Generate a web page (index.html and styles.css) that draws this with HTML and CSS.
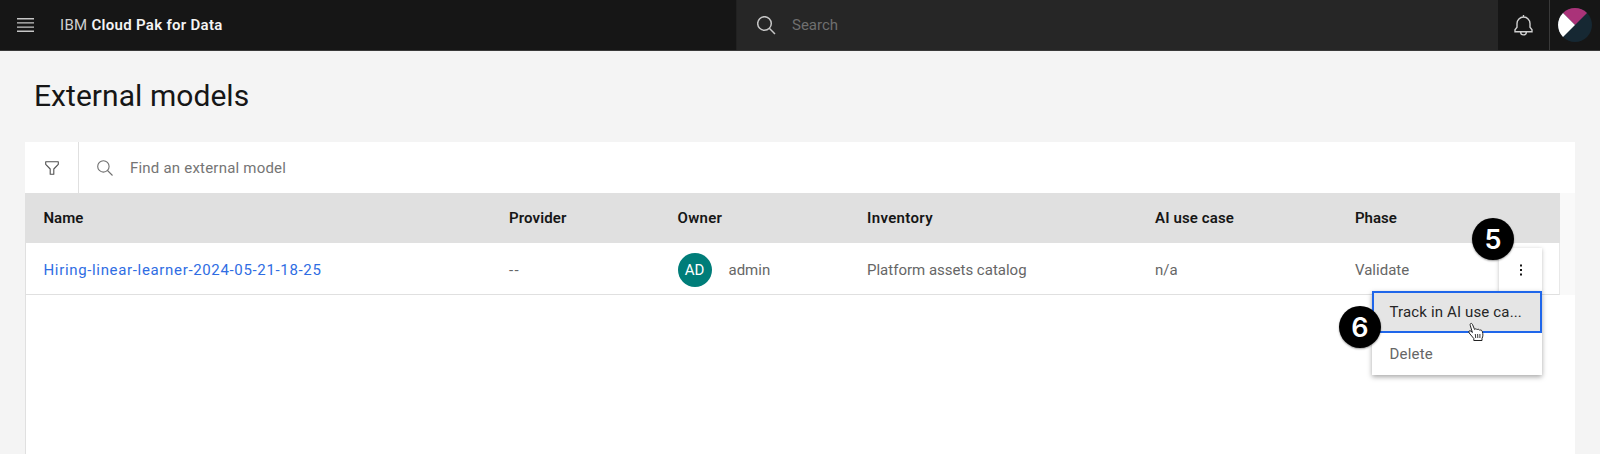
FILE: index.html
```html
<!DOCTYPE html>
<html lang="en">
<head>
<meta charset="utf-8">
<title>External models</title>
<link rel="stylesheet" href="styles.css">
</head>
<body>
<header class="topbar">
  <svg class="menu-icon" width="17" height="14" viewBox="0 0 17 14"><path d="M0 .7h17M0 4.9h17M0 9.1h17M0 13.3h17" stroke="#c6c6c6" stroke-width="1.4"/></svg>
  <div class="brand"><span class="t brand-ibm">IBM</span><span class="t brand-name">Cloud Pak for Data</span></div>
  <div class="global-search">
    <svg width="19" height="19" viewBox="0 0 19 19" fill="none" stroke="#c6c6c6" stroke-width="1.5"><circle cx="7.5" cy="7.5" r="6.8"/><path d="M12.3 12.3l5.7 5.7"/></svg>
    <span class="t">Search</span>
  </div>
  <div class="bell">
    <svg width="19" height="21" viewBox="0 0 19 21" fill="none" stroke="#d0d0d0" stroke-width="1.4"><path d="M9.5 0v2M1 16.7v-2l2-2.4V8.5a6.5 6.5 0 0 1 13 0v3.8l2 2.4v2zM6.6 17a2.9 2.9 0 0 0 5.8 0"/></svg>
  </div>
  <div class="profile">
    <svg width="34" height="34" viewBox="0 0 34 34"><circle cx="17" cy="17" r="17" fill="#162833"/><path d="M17 17L5 5A17 17 0 0 1 29 5z" fill="#aa3379"/><path d="M17 17L5 5A17 17 0 0 0 5 29z" fill="#fff"/></svg>
  </div>
</header>
<main class="page">
  <h1 class="title">External models</h1>
  <section class="panel">
    <div class="toolbar">
      <div class="filter"><svg width="14" height="14" viewBox="0 0 14 14" fill="none" stroke="#525252" stroke-width="1.1" stroke-linejoin="round"><path d="M.7.7h12.6v2.6L8.8 8v5.3H5.2V8L.7 3.3z"/></svg></div>
      <svg class="find-icon" width="16" height="16" viewBox="0 0 16 16" fill="none" stroke="#6f6f6f" stroke-width="1.1"><circle cx="6.4" cy="6.4" r="5.7"/><path d="M10.5 10.5l5 5"/></svg>
      <span class="t find-text">Find an external model</span>
    </div>
    <div class="table-area">
      <div class="table">
        <div class="row head">
          <div><span class="t">Name</span></div>
          <div><span class="t h-provider">Provider</span></div>
          <div><span class="t h-owner">Owner</span></div>
          <div><span class="t h-inventory">Inventory</span></div>
          <div><span class="t h-usecase">AI use case</span></div>
          <div><span class="t">Phase</span></div>
        </div>
        <div class="row body">
          <div><a class="t c-name">Hiring-linear-learner-2024-05-21-18-25</a></div>
          <div><span class="t c-provider">--</span></div>
          <div class="owner"><span class="initials">AD</span><span class="t">admin</span></div>
          <div><span class="t">Platform assets catalog</span></div>
          <div><span class="t">n/a</span></div>
          <div><span class="t">Validate</span></div>
        </div>
      </div>
    </div>
  </section>
</main>
<div class="overflow"><svg width="4" height="12" viewBox="0 0 4 12" fill="#161616"><rect x="1" y="0.5" width="2" height="2"/><rect x="1" y="5" width="2" height="2"/><rect x="1" y="9.5" width="2" height="2"/></svg></div>
<div class="menu">
  <div class="menu-item focused"><span class="t m-track">Track in AI use ca...</span></div>
  <div class="menu-item"><span class="t m-delete">Delete</span></div>
</div>
<div class="step step-five">5</div>
<div class="step step-six">6</div>
<svg class="cursor" width="18" height="20" viewBox="0 0 18 20"><path d="M6.8 18.5v-2L2.2 11C1 9.2 2.6 8 4 9.2l1.400 1.300L3.200 3.200C2.700 1.300 4.800.7 5.500 2.500l2.100 5c.7-1 2-.8 2.500.2.8-.8 2-.5 2.400.5 1.200-.6 2.500.1 2.900 1.500.7 2.400.7 4.700-.4 6.800v2z" fill="#fff" stroke="#222" stroke-linejoin="round"/><path d="M8.300 12l.4 4M10.600 12l.2 4M12.900 12v4" fill="none" stroke="#222" stroke-width=".9"/></svg>
</body>
</html>
```
FILE: styles.css
```css
* { box-sizing: border-box; }
body { margin: 0; height: 454px; overflow: hidden; position: relative; background: #f4f4f4; color: #161616; font-family: Roboto, sans-serif; font-size: 15px; }
svg { display: block; flex: none; }
.t { white-space: nowrap; }
.topbar { display: flex; align-items: center; height: 51px; padding-left: 17px; background: #161616; border-bottom: 1px solid #393939; }
.brand { display: flex; flex: none; gap: 4px; margin-left: 26px; width: 676px; color: #f4f4f4; }
.brand-ibm { color: #d0d0d0; letter-spacing: .3px; }
.brand-name { font-weight: 600; letter-spacing: .3px; }
.global-search { display: flex; flex: none; align-items: center; align-self: stretch; gap: 16px; width: 762px; padding-left: 20px; border-left: 1px solid #212121; background: #262626; color: #6f6f6f; }
.bell { display: flex; flex: none; align-items: center; justify-content: center; width: 51px; }
.profile { display: flex; align-items: center; align-self: stretch; border-left: 1px solid #393939; padding-left: 8px; }
.page { padding: 0 25px; }
.title { margin: 0; height: 91px; padding: 28px 0 0 9px; font-size: 30px; line-height: 34px; font-weight: 400; letter-spacing: .05px; }
.panel { height: 312px; background: #fff; }
.toolbar { display: flex; align-items: center; height: 51px; color: #757575; }
.filter { display: flex; align-items: center; align-self: stretch; width: 54px; padding-left: 20px; border-right: 1px solid #e0e0e0; }
.find-icon { margin: 0 17px 0 18px; }
.find-text { letter-spacing: .21px; }
.table-area { height: 261px; border-left: 1px solid #e0e0e0; }
.table { border-right: 15px solid #f9f9f9; }
.row { display: grid; grid-template-columns: 465.5px 168.5px 189.500px 288px 200px 1fr; align-items: center; padding-left: 17.5px; }
.head { height: 50px; background: #e0e0e0; font-weight: 600; }
.h-provider { letter-spacing: .13px; }
.h-owner { letter-spacing: .3px; }
.h-inventory { letter-spacing: .35px; }
.h-usecase { letter-spacing: .13px; }
.body { height: 52px; padding-top: 2px; color: #666; border-bottom: 1px solid #e0e0e0; border-right: 1px solid #e8e8e8; }
.c-name { color: #2f6de3; letter-spacing: .66px; }
.c-provider { letter-spacing: 1.4px; }
.owner { display: flex; align-items: center; gap: 17px; }
.initials { display: flex; align-items: center; justify-content: center; width: 34px; height: 34px; border-radius: 50%; background: #007d79; color: #fff; }
.overflow { position: absolute; left: 1499px; top: 248px; width: 43px; height: 44px; display: flex; align-items: center; justify-content: center; background: #fff; box-shadow: 0 1px 4px rgba(0,0,0,.25); }
.menu { position: absolute; left: 1372px; top: 291px; width: 170px; background: #fff; box-shadow: 0 2px 5px rgba(0,0,0,.35); }
.menu-item { display: flex; align-items: center; height: 42px; padding-left: 17.5px; color: #666; }
.focused { padding-left: 15.5px; color: #262626; background: #e5e5e5; border: 2px solid #1f66ea; }
.m-track { letter-spacing: .15px; }
.m-delete { letter-spacing: .2px; }
.step { position: absolute; width: 42px; height: 42px; display: flex; align-items: center; justify-content: center; border-radius: 50%; background: #000; color: #fff; font: 600 27px Inter, sans-serif; box-shadow: 0 1px 2px rgba(0,0,0,.4); }
.step-five { left: 1472px; top: 218px; }
.step-six { left: 1339px; top: 306px; }
.cursor { position: absolute; left: 1467px; top: 322px; }
```
